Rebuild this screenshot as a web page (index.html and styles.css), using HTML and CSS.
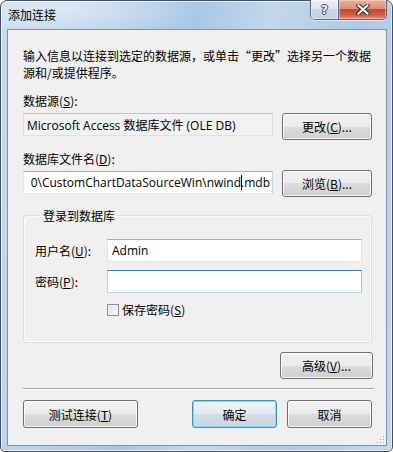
FILE: index.html
```html
<!DOCTYPE html>
<html lang="zh-CN">
<head>
<meta charset="utf-8">
<title>添加连接</title>
<link rel="stylesheet" href="styles.css">
</head>
<body>
<div class="window">
  <div class="titlebar">
    <span class="title">添加连接</span>
    <div class="caption-buttons">
      <div class="cap help"><span class="qmark">?</span></div>
      <div class="cap close">
        <svg width="14" height="11" viewBox="0 0 14 11">
          <path d="M2.5 1.5 L11.5 9.5 M11.5 1.5 L2.5 9.5" stroke="#3b2a2a" stroke-width="4.2" stroke-linecap="square" fill="none"/>
          <path d="M2.5 1.5 L11.5 9.5 M11.5 1.5 L2.5 9.5" stroke="#ffffff" stroke-width="2.2" stroke-linecap="square" fill="none"/>
        </svg>
      </div>
    </div>
  </div>
  <div class="client">
    <p class="intro">输入信息以连接到选定的数据源，或单击“更改”选择另一个数据<br>源和/或提供程序。</p>

    <div class="label first">数据源(<u>S</u>):</div>
    <div class="row">
      <div class="field readonly">Microsoft Access 数据库文件 (OLE DB)</div>
      <div class="btn side">更改(<u>C</u>)...</div>
    </div>

    <div class="label second">数据库文件名(<u>D</u>):</div>
    <div class="row">
      <div class="field path"><span class="path-text">0\CustomChartDataSourceWin\nwind<span class="caret"></span>.mdb</span></div>
      <div class="btn side">浏览(<u>B</u>)...</div>
    </div>

    <fieldset class="group">
      <legend>登录到数据库</legend>
      <div class="grow first-grow">
        <span class="glabel">用户名(<u>U</u>):</span>
        <div class="field gfield">Admin</div>
      </div>
      <div class="grow">
        <span class="glabel">密码(<u>P</u>):</span>
        <div class="field gfield hover"></div>
      </div>
      <div class="check-row">
        <span class="checkbox"></span>
        <span>保存密码(<u>S</u>)</span>
      </div>
    </fieldset>

    <div class="btn advanced">高级(<u>V</u>)...</div>

    <div class="separator"></div>

    <div class="bottom">
      <div class="btn test">测试连接(<u>T</u>)</div>
      <div class="spacer"></div>
      <div class="btn default ok">确定</div>
      <div class="btn cancel">取消</div>
    </div>

    <svg class="grip" width="8" height="8" viewBox="0 0 8 8">
      <rect x="6" y="0" width="1" height="1" fill="#9a9a9a"/>
      <rect x="3" y="3" width="1" height="1" fill="#9a9a9a"/>
      <rect x="6" y="3" width="1" height="1" fill="#9a9a9a"/>
      <rect x="0" y="6" width="1" height="1" fill="#9a9a9a"/>
      <rect x="3" y="6" width="1" height="1" fill="#9a9a9a"/>
      <rect x="6" y="6" width="1" height="1" fill="#9a9a9a"/>
      <rect x="7" y="1" width="1" height="1" fill="#ffffff"/>
      <rect x="4" y="4" width="1" height="1" fill="#ffffff"/>
      <rect x="7" y="4" width="1" height="1" fill="#ffffff"/>
      <rect x="1" y="7" width="1" height="1" fill="#ffffff"/>
      <rect x="4" y="7" width="1" height="1" fill="#ffffff"/>
      <rect x="7" y="7" width="1" height="1" fill="#ffffff"/>
    </svg>
  </div>
</div>
</body>
</html>
```

FILE: styles.css
```css
* { box-sizing: border-box; }

html, body {
  margin: 0;
  padding: 0;
}

body {
  width: 393px;
  height: 452px;
  overflow: hidden;
  background: #ffffff;
  font-family: "Noto Sans CJK SC", sans-serif;
  font-size: 12px;
  color: #000;
}

.window {
  width: 393px;
  height: 452px;
  display: flex;
  flex-direction: column;
  border: 1px solid #44505e;
  border-radius: 7px 7px 5px 5px;
  background:
    radial-gradient(ellipse 140px 30px at 60px 8px, rgba(255,255,255,0.45), rgba(255,255,255,0)),
    linear-gradient(100deg, #c8dbef 0%, #b9d1ea 25%, #a9c7e5 42%, #c2d7ec 58%, #aecae7 78%, #c3d8ed 100%);
  box-shadow: inset 0 0 0 1px rgba(255,255,255,0.6);
}

.titlebar {
  height: 28px;
  display: flex;
  align-items: flex-start;
  padding-left: 7px;
  flex-shrink: 0;
}

.title {
  line-height: 28px;
  font-size: 12px;
  color: #000;
}

.caption-buttons {
  margin-left: auto;
  margin-right: 5px;
  margin-top: -1px;
  display: flex;
  height: 20px;
  border: 1px solid #56677a;
  border-top: none;
  border-radius: 0 0 5px 5px;
  overflow: hidden;
  box-shadow: 0 1px 0 rgba(255,255,255,0.6);
}

.cap {
  height: 19px;
  display: flex;
  align-items: center;
  justify-content: center;
}

.help {
  width: 28px;
  border-right: 1px solid #56677a;
  background: linear-gradient(#e9eff6 0%, #dde6f0 45%, #c9d5e3 50%, #c4d2e2 100%);
  box-shadow: inset 0 0 0 1px rgba(255,255,255,0.55);
}

.qmark {
  font-family: "DejaVu Sans", sans-serif;
  font-weight: bold;
  font-size: 12px;
  line-height: 12px;
  color: #f4f6f8;
  text-shadow: 1px 0 0 #3e4a57, -1px 0 0 #3e4a57, 0 1px 0 #3e4a57, 0 -1px 0 #3e4a57;
}

.close {
  width: 47px;
  background: linear-gradient(#eab1a3 0%, #df8e7c 45%, #c9452f 50%, #d35d44 80%, #e4957a 100%);
  box-shadow: inset 0 0 0 1px rgba(255,220,210,0.5);
}

.client {
  position: relative;
  width: 380px;
  height: 417px;
  margin-left: 6px;
  border: 1px solid #7d93ab;
  background: #f0f0f0;
  padding: 17px 14px 0 15px;
  display: flex;
  flex-direction: column;
}

.intro {
  margin: 0;
  line-height: 17px;
  white-space: nowrap;
}

.label {
  line-height: 17px;
}

.label.first { margin-top: 11px; }
.label.second { margin-top: 10px; }

.row {
  display: flex;
  align-items: flex-start;
  margin-top: 4px;
}

.label.second + .row { margin-top: 3px; }

.field {
  height: 23px;
  background: #fff;
  border: 1px solid;
  border-color: #abadb3 #dbdfe6 #e3e9ef #e2e3ea;
  display: flex;
  align-items: center;
  padding-left: 3px;
  font-family: "Open Sans", "Noto Sans CJK SC", sans-serif;
  font-size: 12px;
  white-space: nowrap;
  overflow: hidden;
}

.row .field {
  width: 250px;
}

.readonly {
  background: #f2f2f2;
  border-color: #c4c4c4 #dcdcdc #e2e2e2 #dcdcdc;
  padding-left: 3px;
}

.path {
  margin-top: 1px;
  justify-content: flex-end;
  padding-right: 2px;
  border-color: #abadb3 #c5d6e6 #dfe8f1 #dbe4ee;
}

.path-text {
  flex-shrink: 0;
}

.caret {
  display: inline-block;
  width: 1px;
  height: 15px;
  background: #000;
  vertical-align: -3px;
  margin-right: -1px;
}

.btn {
  height: 27px;
  border: 1px solid #707070;
  border-radius: 3px;
  background: linear-gradient(#f2f2f2 0%, #ebebeb 50%, #dddddd 50%, #cfcfcf 100%);
  box-shadow: inset 0 0 0 1px rgba(255,255,255,0.8);
  display: flex;
  align-items: center;
  justify-content: center;
  white-space: nowrap;
  line-height: 17px;
}

.btn.side {
  width: 90px;
  margin-left: auto;
}

.group {
  margin: 10px 0 0 0;
  padding: 0 9px 24px 11px;
  border: 1px solid #d5dfe5;
  border-radius: 3px;
  box-shadow: inset 0 0 0 1px rgba(255,255,255,0.7);
  min-width: 0;
}

.group legend {
  margin-left: 6px;
  padding: 0 2px;
  line-height: 17px;
}

.grow {
  display: flex;
  align-items: center;
  margin-top: 8px;
}

.grow.first-grow { margin-top: 15px; }

.glabel {
  width: 72px;
  flex-shrink: 0;
  line-height: 17px;
}

.gfield {
  flex: 1;
  padding-left: 4px;
}

.gfield.hover {
  border-color: #3d7bad #a4c9e3 #b7d9ed #b5cfe7;
}

.check-row {
  display: flex;
  align-items: center;
  margin-top: 8px;
  margin-left: 72px;
  line-height: 17px;
}

.checkbox {
  width: 12px;
  height: 12px;
  border: 1px solid #8e8f8f;
  background: linear-gradient(135deg, #dcdcdc 0%, #f0f0f0 60%, #ffffff 100%);
  box-shadow: inset 0 0 0 1px #f4f4f4;
  margin-right: 3px;
  flex-shrink: 0;
}

.btn.advanced {
  width: 93px;
  align-self: flex-end;
  margin-top: 9px;
  margin-right: -1px;
}

.separator {
  margin-top: 9px;
  height: 2px;
  border-top: 1px solid #a0a0a0;
  border-bottom: 1px solid #ffffff;
  margin-right: -2px;
}

.bottom {
  display: flex;
  margin-top: 10px;
}

.bottom .btn {
  height: 28px;
}

.btn.test { width: 115px; }

.spacer { flex: 1; }

.btn.ok { width: 85px; }

.btn.cancel {
  width: 85px;
  margin-left: 10px;
}

.btn.default {
  border-color: #3591d0;
  background: linear-gradient(#eef3f7 0%, #e4ebf1 50%, #d4dee7 50%, #c9d6e1 100%);
  box-shadow: inset 0 0 0 1px #8fd6f7;
}

.grip {
  position: absolute;
  right: 1px;
  bottom: 1px;
}
```
